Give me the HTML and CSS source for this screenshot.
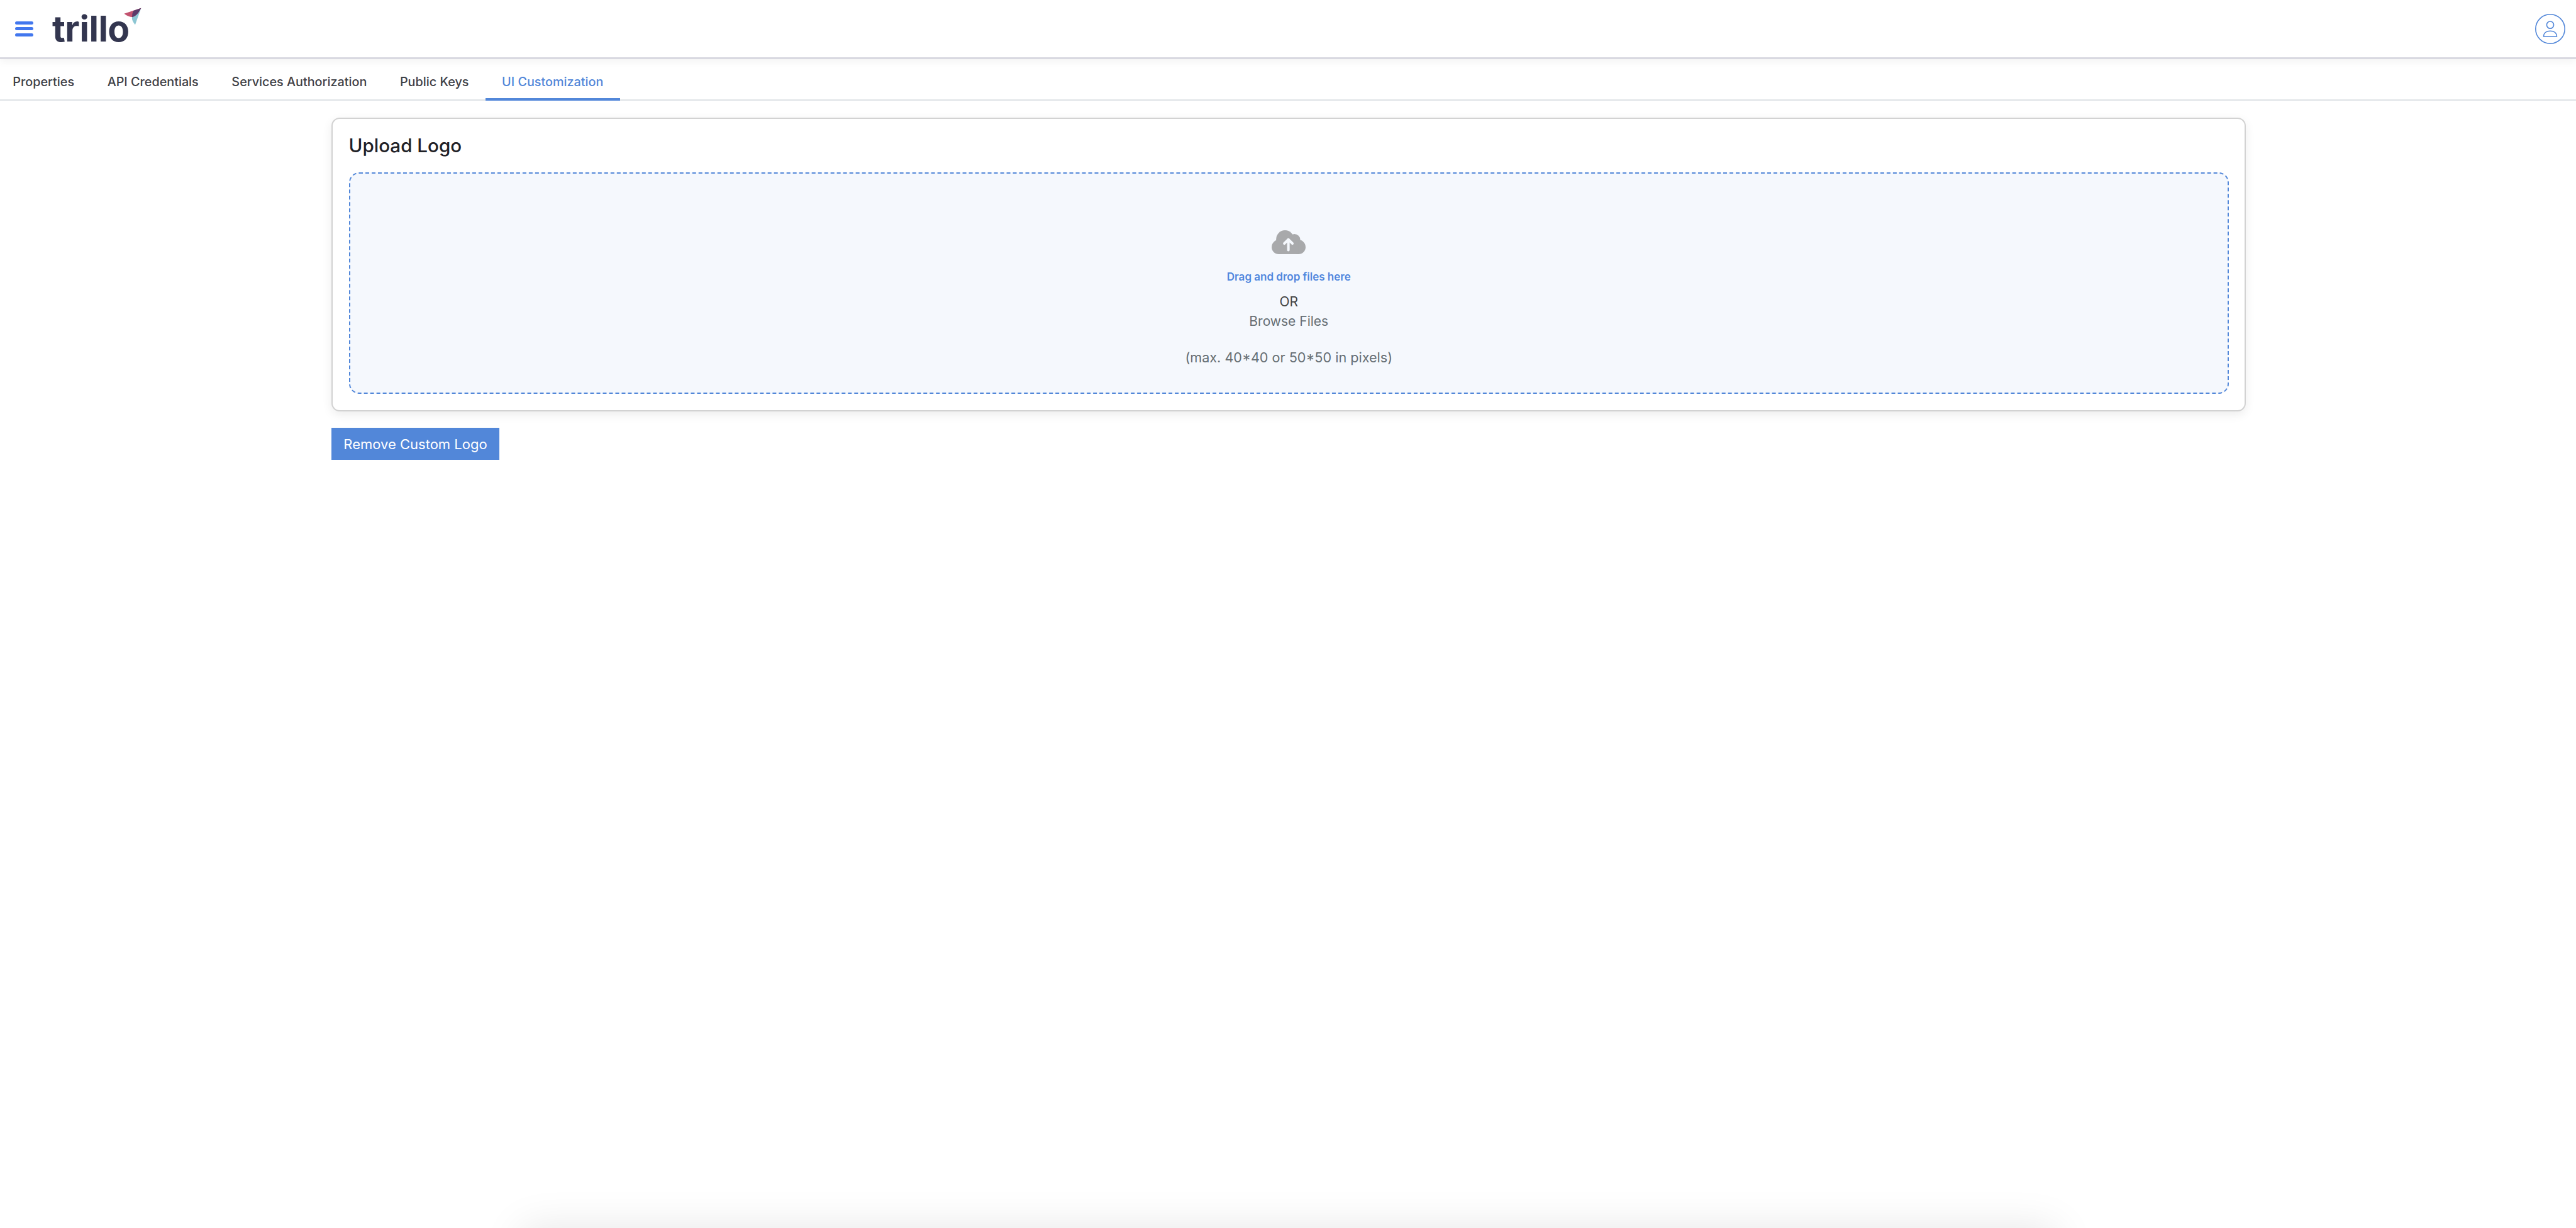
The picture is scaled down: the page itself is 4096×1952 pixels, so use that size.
FILE: index.html
```html
<!DOCTYPE html>
<html lang="en">
<head>
<meta charset="utf-8">
<title>UI Customization</title>
<link rel="stylesheet" href="styles.css">
</head>
<body>
<div class="app">
  <header class="topbar">
    <div class="brand">
      <button class="menu" aria-label="Menu"><span></span><span></span><span></span></button>
      <div class="logo">trillo
        <svg class="logo-mark" viewBox="0 0 37 37"><path fill="#c2526f" d="M35 2.3 1.7 13.3Q10 20 18 20 27 19 35 2.3Z"/><path fill="#8cc6d3" d="M35 2.3 23.3 35Q16 26 17.3 20 27 19 35 2.3Z"/><path fill="#5a3a68" d="M35 2.3 20 7.3Q17 13 17.3 20 27 19 35 2.3Z"/></svg>
      </div>
    </div>
    <svg class="avatar" viewBox="0 0 60 60" fill="none" stroke="#5287d9" stroke-width="2"><circle cx="30" cy="30" r="29"/><circle cx="30" cy="22" r="7"/><path d="M17 45C17 38 22 34 30 34S43 38 43 45Z"/></svg>
  </header>
  <nav class="tabs">
    <a class="tab">Properties</a>
    <a class="tab">API Credentials</a>
    <a class="tab">Services Authorization</a>
    <a class="tab">Public Keys</a>
    <a class="tab active">UI Customization</a>
  </nav>
  <main class="content">
    <section class="card">
      <h2 class="card-title">Upload Logo</h2>
      <div class="dropzone">
        <svg class="cloud" viewBox="0 0 67 47"><g fill="#a8a9ab"><circle cx="26.4" cy="17.5" r="17.5"/><circle cx="45" cy="19" r="11.5"/><circle cx="14" cy="33" r="14"/><circle cx="53" cy="33" r="14"/><rect x="14" y="19" width="39" height="28"/></g><path fill="none" stroke="#f5f8fd" stroke-width="5" stroke-linecap="round" stroke-linejoin="round" d="M33 39V18M25 26 33 18 41 26"/></svg>
        <p class="drag">Drag and drop files here</p>
        <p class="or">OR</p>
        <p class="browse">Browse Files</p>
        <p class="limits">(max. 40*40 or 50*50 in pixels)</p>
      </div>
    </section>
    <button class="remove">Remove Custom Logo</button>
  </main>
  <div class="offscreen-panel"></div>
</div>
</body>
</html>
```
FILE: styles.css
```css
* { box-sizing: border-box; }
html, body { margin: 0; padding: 0; background: #fff; }
body { font-family: Inter, "Liberation Sans", sans-serif; color: #3f4147; }
.app { position: relative; height: 100vh; overflow: hidden; }

.topbar {
  position: relative;
  display: flex;
  align-items: center;
  justify-content: space-between;
  height: 94px;
  padding: 0 17px 0 24px;
  background: #fff;
  border-bottom: 3px solid #d9d9e1;
  box-shadow: 0 4px 12px rgba(0, 0, 0, .05);
}
.brand { display: flex; align-items: center; gap: 30px; }
.menu {
  display: flex;
  flex-direction: column;
  justify-content: space-between;
  width: 29px;
  height: 24px;
  padding: 0;
  border: 0;
  background: none;
}
.menu span { display: block; height: 5px; border-radius: 3px; background: #4277ee; }
.logo {
  position: relative;
  width: 142px;
  font-size: 57px;
  line-height: 62px;
  font-weight: 700;
  letter-spacing: -.5px;
  color: #33364f;
}
.logo-mark { position: absolute; left: 113px; top: -4px; width: 30px; height: 30px; }
.avatar { width: 48px; height: 48px; }

.tabs {
  display: flex;
  height: 66px;
  margin-left: -6px;
  border-bottom: 2.4px solid #dee2e6;
}
.tab {
  display: flex;
  align-items: center;
  height: 66px;
  padding: 10px 26.3px 0;
  font-size: 19.8px;
  font-weight: 500;
  color: #3f4147;
  white-space: nowrap;
  border-bottom: 4px solid transparent;
}
.tab.active { color: #5287d9; border-bottom-color: #5287d9; }

.content { width: 3044px; margin: 27px 0 0 527px; }
.card {
  height: 467px;
  padding: 20px 25px 27px 25.5px;
  background: #fff;
  border: 2.4px solid #d2d2d2;
  border-radius: 13px;
  box-shadow: 0 5px 16px rgba(0, 0, 0, .08);
}
.card-title {
  height: 44px;
  margin: 0 0 21px;
  font-size: 29.6px;
  line-height: 44px;
  font-weight: 500;
  color: #1f2126;
}
.dropzone {
  display: flex;
  flex-direction: column;
  align-items: center;
  height: 352px;
  padding-top: 90px;
  background: #f5f8fd;
  border: 2px dashed #5287d9;
  border-radius: 16px;
}
.dropzone p { margin: 0; white-space: nowrap; }
.cloud { display: block; width: 54px; height: 38px; flex: none; }
.dropzone .drag { margin-top: 24px; font-size: 17px; line-height: 24px; font-weight: 600; color: #4f86dd; }
.dropzone .or { margin-top: 14px; font-size: 21px; line-height: 28px; color: #444; }
.dropzone .browse { margin-top: 3px; font-size: 21px; line-height: 28px; color: #666e73; }
.dropzone .limits { margin-top: 28.5px; font-size: 21.6px; line-height: 28px; color: #666e73; }

.remove {
  display: block;
  width: 267px;
  height: 51px;
  margin-top: 26px;
  padding: 0;
  border: 0;
  background: #5287d9;
  color: #fff;
  font-family: inherit;
  font-size: 22px;
}
.offscreen-panel {
  position: absolute;
  top: 100%;
  left: 830px;
  width: 2440px;
  height: 200px;
  border-radius: 8px;
  box-shadow: 0 0 66px rgba(0, 0, 0, .1);
}
```
